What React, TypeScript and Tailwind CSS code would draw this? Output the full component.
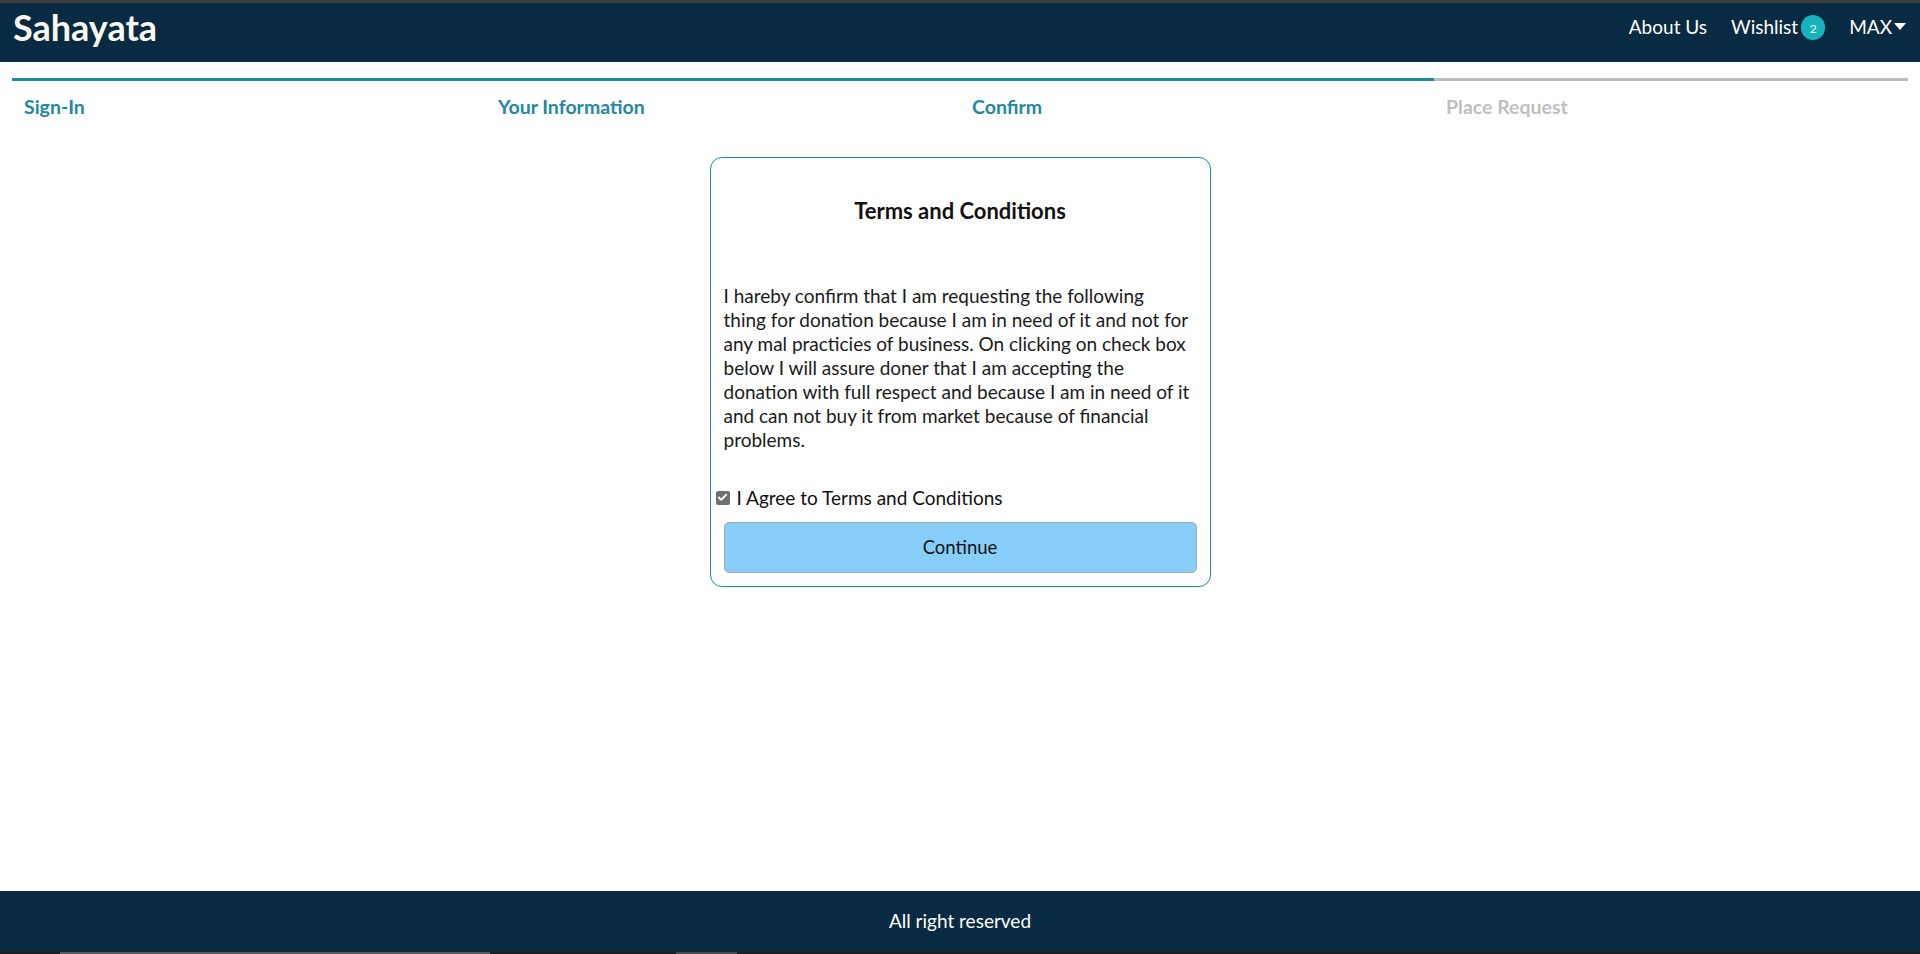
import { Check } from "lucide-react";

const STEPS = [
  { label: "Sign-In", done: true },
  { label: "Your Information", done: true },
  { label: "Confirm", done: true },
  { label: "Place Request", done: false },
];

const TERMS_LINES = [
  "I hareby confirm that I am requesting the following",
  "thing for donation because I am in need of it and not for",
  "any mal practicies of business. On clicking on check box",
  "below I will assure doner that I am accepting the",
  "donation with full respect and because I am in need of it",
  "and can not buy it from market because of financial",
  "problems.",
];

function Header() {
  return (
    <div className="flex flex-col">
      <div className="h-[3px] bg-[#3d3d3d]" />
      <header className="flex h-[59px] items-center justify-between bg-[#082a42] pb-[10px] pl-[13px] pr-[14px]">
        <span className="text-[36px] font-bold leading-none text-[#fbf8f0] pb-[2px]">Sahayata</span>
        <nav className="flex items-center text-[19px] text-white">
          <span className="mr-[24px]">About Us</span>
          <span className="flex items-center mr-[24px]">
            Wishlist
            <span className="ml-[3px] flex h-[25px] w-[24px] items-center justify-center rounded-full bg-[#17b3bd] text-[12px] pt-[3px]">
              2
            </span>
          </span>
          <span className="flex items-center">
            MAX
            <svg width="12" height="8" viewBox="0 0 12 8" className="ml-[2px] mb-[2px]">
              <path d="M0 0 L12 0 L6 7 Z" fill="#fff" />
            </svg>
          </span>
        </nav>
      </header>
    </div>
  );
}

function Stepper() {
  return (
    <div className="mx-[12px] mt-[16px] grid grid-cols-4">
      {STEPS.map((s) => (
        <div key={s.label} className="flex flex-col">
          <div className={s.done ? "h-[3px] bg-[#1b8ca0]" : "h-[3px] bg-[#bdbdbd]"} />
          <span
            className={
              "px-[12px] pt-[11px] pb-[1px] text-[19.5px] font-bold " +
              (s.done ? "text-[#2289a1]" : "text-[#bfbfbf]")
            }
          >
            {s.label}
          </span>
        </div>
      ))}
    </div>
  );
}

function TermsCard() {
  return (
    <div className="mx-auto mt-[35px] flex w-[501px] flex-col rounded-[12px] border border-[#1b8ca0] px-[13px] pb-[13px] pt-[40px]">
      <h2 className="text-center text-[22px] font-bold leading-[26px] text-[#111]">Terms and Conditions</h2>
      <p className="mt-[60px] text-[19px] leading-[24px] text-[#1a1a1a]">
        {TERMS_LINES.map((line, i) => (
          <span key={i} className="block whitespace-nowrap">
            {line}
          </span>
        ))}
      </p>
      <label className="-ml-[8px] mt-[34px] flex h-[23px] items-center text-[19px] text-[#111]">
        <span className="mr-[7px] flex h-[14px] w-[14px] items-center justify-center rounded-[2px] bg-[#6f6f6f]">
          <Check className="h-[11px] w-[11px] text-white" strokeWidth={4} />
        </span>
        I Agree to Terms and Conditions
      </label>
      <button className="mt-[13px] h-[51px] w-full rounded-[5px] border border-[#a9a9a9] bg-[#87cefa] text-[18.5px] text-[#111]">
        Continue
      </button>
    </div>
  );
}

function Footer() {
  return (
    <div className="flex flex-col">
      <footer className="flex h-[61px] items-center justify-center bg-[#082a42] text-[19px] text-white">
        All right reserved
      </footer>
      <div className="flex h-[2px] bg-[#1e1e1e]">
        <div className="ml-[60px] w-[430px] bg-[#5a5a5a]" />
        <div className="ml-[186px] w-[61px] bg-[#4a4a4a]" />
      </div>
    </div>
  );
}

export default function App() {
  return (
    <div className="flex h-screen flex-col bg-white font-['Lato',sans-serif]">
      <Header />
      <main className="flex-1">
        <Stepper />
        <TermsCard />
      </main>
      <Footer />
    </div>
  );
}
